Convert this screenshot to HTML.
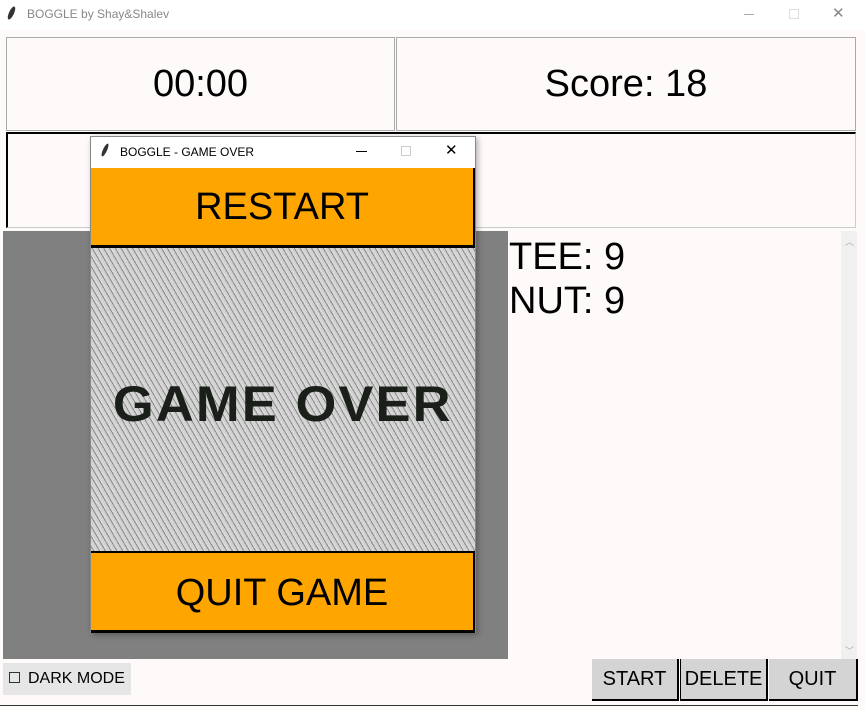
<!DOCTYPE html><html><head><style>
body{margin:0;width:865px;height:710px;background:#fffafa;position:relative;overflow:hidden;font-family:"Liberation Sans",sans-serif}
.a{position:absolute;box-sizing:border-box}
.c{display:flex;align-items:center;justify-content:center}
</style></head><body>
<div class="a" style="left:0;top:0;width:865px;height:30px;background:#fff"></div>
<div class="a" style="left:9px;top:6px;width:5px;height:14px;background:#333;border-radius:50%;transform:rotate(25deg)"></div>
<div class="a" style="left:27px;top:7px;font-size:12px;color:#888">BOGGLE by Shay&amp;Shalev</div>
<div class="a" style="left:744px;top:14px;width:10px;height:1px;background:#aaa"></div>
<div class="a" style="left:789px;top:9px;width:10px;height:10px;border:1px solid #ddd"></div>
<div class="a" style="left:832px;top:4px;font-size:15px;color:#888">✕</div>
<div class="a c" style="left:6px;top:37px;width:389px;height:94px;border:1px solid #aaa;font-size:38px">00:00</div>
<div class="a c" style="left:396px;top:37px;width:460px;height:94px;border:1px solid #aaa;font-size:38px">Score: 18</div>
<div class="a" style="left:6px;top:132px;width:850px;height:96px;border:1px solid #ccc;border-top:2px solid #000;border-left:2px solid #000"></div>
<div class="a" style="left:3px;top:231px;width:505px;height:428px;background:#808080"></div>
<div class="a" style="left:508px;top:231px;width:333px;height:428px;background:#fffafa;font-size:38px;line-height:44px;padding-left:1px;padding-top:4px">TEE: 9<br>NUT: 9</div>
<div class="a" style="left:841px;top:231px;width:16px;height:428px;background:#f0f0f0"></div>
<div class="a" style="left:845px;top:235px;font-size:9px;color:#aaa">︿</div>
<div class="a" style="left:845px;top:644px;font-size:9px;color:#aaa">﹀</div>
<div class="a" style="left:3px;top:663px;width:128px;height:32px;background:#e6e6e6;font-size:16px;padding:7px 0 0 6px"><span style="display:inline-block;width:9px;height:9px;border:1px solid #333;margin-right:8px"></span>DARK MODE</div>
<div class="a c" style="left:592px;top:659px;width:87px;height:42px;background:#d4d4d4;border-right:2px solid #000;border-bottom:2px solid #000;font-size:20px">START</div>
<div class="a c" style="left:680px;top:659px;width:88px;height:42px;background:#d4d4d4;border-right:2px solid #000;border-bottom:2px solid #000;border-left:1px solid #000;font-size:20px">DELETE</div>
<div class="a c" style="left:769px;top:659px;width:89px;height:42px;background:#d4d4d4;border-right:2px solid #000;border-bottom:2px solid #000;font-size:20px">QUIT</div>
<div class="a" style="left:0;top:705px;width:858px;height:1px;background:#333"></div>
<!-- popup -->
<div class="a" style="left:90px;top:136px;width:386px;height:497px;border:1px solid #888;background:#fff;box-shadow:2px 2px 6px rgba(0,0,0,.3)"></div>
<div class="a" style="left:103px;top:143px;width:4px;height:14px;background:#333;border-radius:50%;transform:rotate(25deg)"></div>
<div class="a" style="left:120px;top:145px;font-size:12px;color:#000">BOGGLE - GAME OVER</div>
<div class="a" style="left:356px;top:151px;width:11px;height:1px;background:#000"></div>
<div class="a" style="left:401px;top:146px;width:10px;height:10px;border:1px solid #ccc"></div>
<div class="a" style="left:445px;top:141px;font-size:15px">✕</div>
<div class="a c" style="left:91px;top:168px;width:384px;height:80px;background:#ffa500;border-right:2px solid #000;border-bottom:3px solid #000;font-size:38px;padding-top:2px">RESTART</div>
<div class="a c" style="left:91px;top:248px;width:384px;height:303px;background:repeating-linear-gradient(60deg,#d0d0d0 0 2px,#8a8a8a 2px 3px,#d8d8d8 3px 5px),#c0c0c0;font-size:50px;font-weight:bold;color:#1a1f1a;letter-spacing:2px;padding-top:8px"><span style="display:inline-block;transform:scaleX(1.05)">GAME OVER</span></div>
<div class="a c" style="left:91px;top:551px;width:384px;height:82px;background:#ffa500;border-right:2px solid #000;border-bottom:3px solid #000;border-top:2px solid #000;font-size:38px;padding-top:3px">QUIT GAME</div>
</body></html>
